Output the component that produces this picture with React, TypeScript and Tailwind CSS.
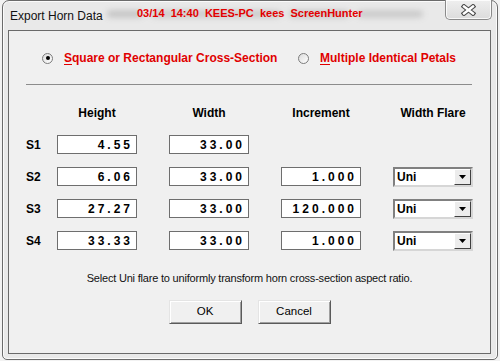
import React from 'react';

const rows = [
  { label: 'S1', h: '4.55', w: '33.00', inc: null as string | null },
  { label: 'S2', h: '6.06', w: '33.00', inc: '1.000' },
  { label: 'S3', h: '27.27', w: '33.00', inc: '120.000' },
  { label: 'S4', h: '33.33', w: '33.00', inc: '1.000' },
];

function Field({ value }: { value: string }) {
  return (
    <div className="w-[80px] h-[19px] shrink-0 bg-white border border-[#6e6e6e] flex items-center justify-end pr-[3px] text-[12px] font-bold tracking-[3px] leading-none text-black">
      {value}
    </div>
  );
}

function FlareSelect() {
  return (
    <div className="w-[80px] h-[20px] shrink-0 bg-white border-2 border-t-[#808080] border-l-[#808080] border-r-[#d6d6d6] border-b-[#d6d6d6] flex items-center">
      <span className="flex-1 pl-[2px] text-[12px] font-bold leading-none">Uni</span>
      <div className="w-[17px] h-[16px] bg-[#ececec] border border-t-white border-l-white border-r-[#404040] border-b-[#404040] flex items-center justify-center">
        <svg width="7" height="4" viewBox="0 0 7 4">
          <path d="M0 0h7L3.5 4z" fill="#000" />
        </svg>
      </div>
    </div>
  );
}

function Radio({ checked }: { checked?: boolean }) {
  return (
    <div className="w-[11px] h-[11px] rounded-full border border-[#7c7c7c] bg-gradient-to-br from-[#dcdcdc] to-white flex items-center justify-center shrink-0">
      {checked && <div className="w-[4px] h-[4px] rounded-full bg-black" />}
    </div>
  );
}

function DlgButton({ children }: { children: React.ReactNode }) {
  return (
    <button className="w-[73px] h-[24px] bg-[#f0f0f0] border border-t-[#e4e4e4] border-l-[#e4e4e4] border-r-[#5a5a5a] border-b-[#5a5a5a] shadow-[inset_1px_1px_0_#ffffff,inset_-1px_-1px_0_#a0a0a0] text-[11.5px] text-black leading-none">
      {children}
    </button>
  );
}

export default function App() {
  return (
    <div className="w-[500px] h-[361px] bg-[#f2f2f2] overflow-hidden font-['Liberation_Sans',Arial,sans-serif] text-black">
      <div className="ml-[2px] w-[496px] h-[360px] rounded-t-[7px] rounded-b-[5px] border border-[#6b6b6b] bg-[#e9e9e9] shadow-[inset_0_0_0_1px_rgba(255,255,255,0.8)] flex flex-col">
        {/* Title bar */}
        <div className="relative h-[29px] flex items-start shrink-0">
          <span className="pl-[7px] pt-[6px] text-[12px] text-[#111]">Export Horn Data</span>

          {/* blurred background text behind the watermark */}
          <div className="absolute left-[104px] top-[7px] w-[330px] h-[11px] flex items-center gap-[8px] opacity-40">
            <div className="h-[6px] w-[36px] bg-[#7a7a7a] blur-[3px] rounded" />
            <div className="h-[6px] w-[130px] bg-[#8a8a8a] blur-[3px] rounded" />
            <div className="h-[6px] w-[60px] bg-[#7a7a7a] blur-[3px] rounded" />
            <div className="h-[6px] w-[66px] bg-[#8a8a8a] blur-[3px] rounded" />
          </div>
          <span className="absolute left-[134px] top-[5px] whitespace-pre text-[11px] font-bold text-[#e30000] leading-[14px]">
            03/14  14:40  KEES-PC  kees  ScreenHunter
          </span>

          {/* close button */}
          <div className="ml-auto mr-[5px] -mt-px w-[47px] h-[20px] rounded-b-[5px] border border-t-0 border-[#8a8a8a] bg-gradient-to-b from-[#efefef] to-[#dcdcdc] shadow-[inset_0_0_0_1px_rgba(255,255,255,0.8)] flex items-center justify-center">
            <svg width="15" height="12" viewBox="0 0 15 12">
              <path d="M3 2.5L12 9.5M12 2.5L3 9.5" stroke="#4a4a4a" strokeWidth="4.6" strokeLinecap="square" />
              <path d="M3 2.5L12 9.5M12 2.5L3 9.5" stroke="#ffffff" strokeWidth="2.4" strokeLinecap="square" />
            </svg>
          </div>
        </div>

        {/* Client area */}
        <div className="ml-[5px] mr-[6px] mb-[5px] flex-1 bg-[#f0f0f0] border border-[#6a6a6a] flex flex-col">
          {/* radio row */}
          <div className="mt-[20px] h-[14px] pl-[33px] flex items-center">
            <div className="w-[256px] flex items-center gap-[11px]">
              <Radio checked />
              <span className="text-[12px] font-bold text-[#e00000] leading-none">
                <span className="underline underline-offset-2">S</span>quare or Rectangular Cross-Section
              </span>
            </div>
            <div className="flex items-center gap-[11px]">
              <Radio />
              <span className="text-[12px] font-bold text-[#e00000] leading-none">
                <span className="underline underline-offset-2">M</span>ultiple Identical Petals
              </span>
            </div>
          </div>

          {/* separator */}
          <div className="mt-[19px] ml-[17px] w-[446px] h-px bg-[#8c8c8c]" />

          {/* headers */}
          <div className="mt-[21px] h-[14px] pl-[48px] flex items-center gap-[32px] text-[12px] font-bold leading-none">
            <span className="w-[80px] text-center">Height</span>
            <span className="w-[80px] text-center">Width</span>
            <span className="w-[80px] text-center">Increment</span>
            <span className="w-[80px] text-center">Width Flare</span>
          </div>

          {/* rows */}
          <div className="mt-[15px] flex flex-col gap-[13px]">
            {rows.map((r) => (
              <div key={r.label} className="h-[19px] pl-[17px] flex items-center">
                <span className="w-[31px] shrink-0 text-[12px] font-bold leading-none">{r.label}</span>
                <div className="flex items-center gap-[32px]">
                  <Field value={r.h} />
                  <Field value={r.w} />
                  {r.inc ? <Field value={r.inc} /> : <div className="w-[80px]" />}
                  {r.inc ? <FlareSelect /> : <div className="w-[80px]" />}
                </div>
              </div>
            ))}
          </div>

          <p className="mt-[21px] text-center text-[11px] tracking-[-0.2px] leading-[14px] text-[#111]">
            Select Uni flare to uniformly transform horn cross-section aspect ratio.
          </p>

          <div className="mt-[15px] flex justify-center gap-[16px]">
            <DlgButton>OK</DlgButton>
            <DlgButton>Cancel</DlgButton>
          </div>
        </div>
      </div>
    </div>
  );
}
